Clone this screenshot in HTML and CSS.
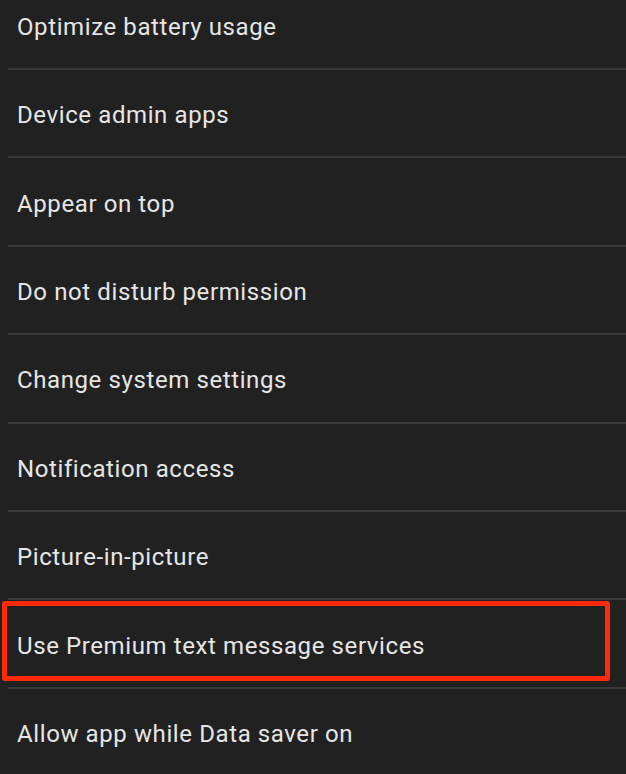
FILE: index.html
```html
<!DOCTYPE html>
<html>
<head>
<meta charset="utf-8">
<link rel="stylesheet" href="styles.css">
</head>
<body>
<ul class="list">
  <li class="row">Optimize battery usage</li>
  <li class="row">Device admin apps</li>
  <li class="row">Appear on top</li>
  <li class="row">Do not disturb permission</li>
  <li class="row">Change system settings</li>
  <li class="row">Notification access</li>
  <li class="row">Picture-in-picture</li>
  <li class="row highlighted">Use Premium text message services</li>
  <li class="row">Allow app while Data saver on</li>
</ul>
</body>
</html>
```

FILE: styles.css
```css
html, body {
  margin: 0;
  padding: 0;
  background: #212121;
  overflow: hidden;
}
.list {
  list-style: none;
  margin: -18.4px 0 0 0;
  padding: 0;
  font-family: Roboto, "Noto Sans", sans-serif;
}
.row {
  position: relative;
  box-sizing: border-box;
  height: 88.4px;
  margin-left: 8px;
  padding: 4px 0 0 9px;
  display: flex;
  align-items: center;
  color: #e6e6e6;
  font-size: 24px;
  letter-spacing: 0.6px;
  border-bottom: 2px solid #3a3a3a;
}
.row.highlighted::after {
  content: "";
  position: absolute;
  left: -6px;
  top: 1px;
  width: 608px;
  height: 80px;
  box-sizing: border-box;
  border: 5px solid #ff2a0c;
  border-radius: 3px;
}
```
